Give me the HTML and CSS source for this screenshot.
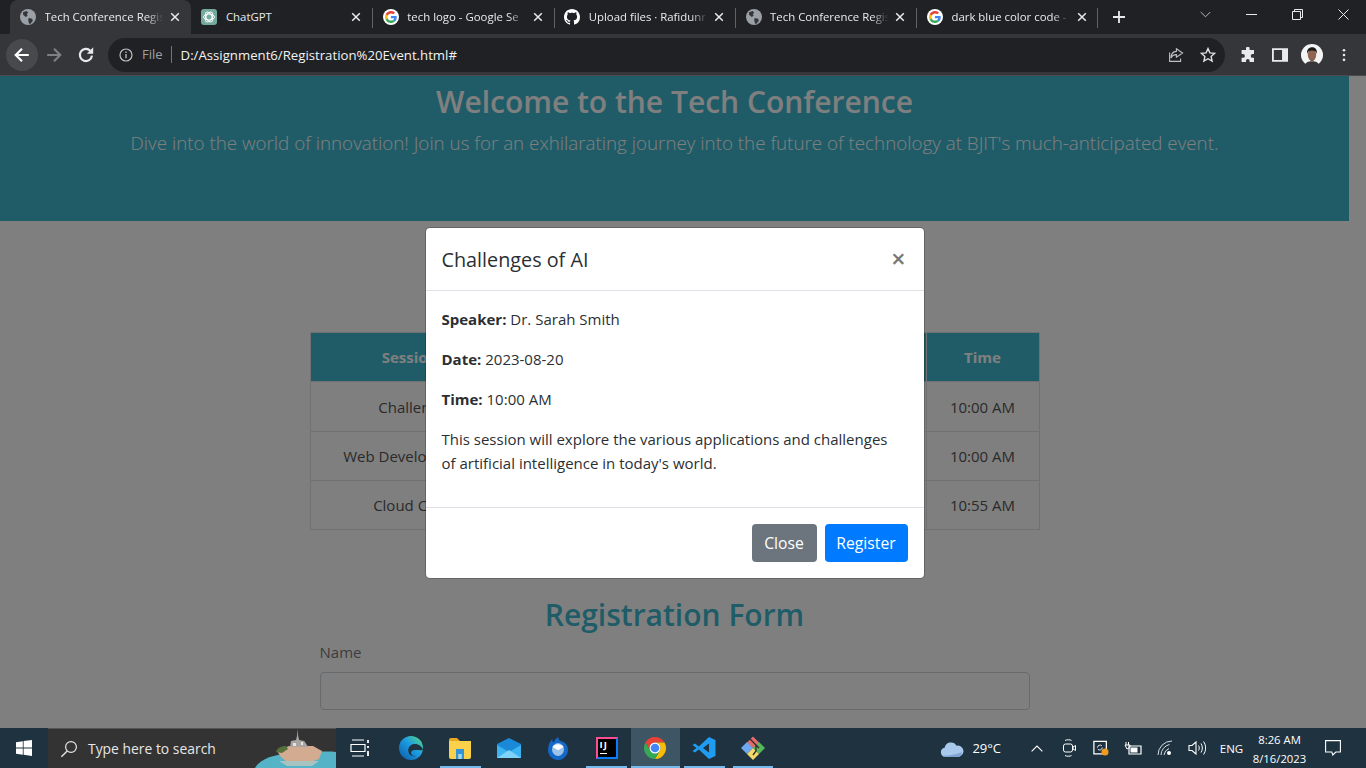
FILE: index.html
```html
<!DOCTYPE html>
<html lang="en">
<head>
  <meta charset="UTF-8" />
  <title>Tech Conference Registration</title>
  <meta name="viewport" content="width=device-width, initial-scale=1.0" />
  <link rel="stylesheet" href="styles.css">
</head>
<body>
  <svg class="sprite" xmlns="http://www.w3.org/2000/svg">
    <symbol id="i-globe" viewBox="0 0 16 16">
      <circle cx="8" cy="8" r="8" fill="#9aa0a6"/>
      <path d="M3 3.2 6.6 2l1.6 1.6-1.4 1.6.9 1.6-2 1.2-2.6-2.2zM8.600 9l3.600.8.6 2.200-2.600 3-1.200-.4-.8-3.400z" fill="#35363a"/>
    </symbol>
    <symbol id="i-google" viewBox="-8 -8 64 64">
      <circle cx="24" cy="24" r="32" fill="#fff"/>
      <path fill="#EA4335" d="M24 9.5c3.54 0 6.71 1.22 9.21 3.6l6.85-6.85C35.9 2.38 30.47 0 24 0 14.62 0 6.51 5.38 2.56 13.22l7.98 6.19C12.43 13.72 17.74 9.5 24 9.5z"/>
      <path fill="#4285F4" d="M46.98 24.55c0-1.57-.15-3.09-.38-4.55H24v9.02h12.94c-.58 2.96-2.26 5.48-4.78 7.18l7.73 6c4.51-4.18 7.09-10.36 7.09-17.65z"/>
      <path fill="#FBBC05" d="M10.53 28.59c-.48-1.45-.76-2.99-.76-4.59s.27-3.14.76-4.59l-7.98-6.19C.92 16.46 0 20.12 0 24c0 3.88.92 7.54 2.56 10.78l7.97-6.19z"/>
      <path fill="#34A853" d="M24 48c6.48 0 11.93-2.13 15.89-5.81l-7.73-6c-2.15 1.45-4.92 2.3-8.16 2.3-6.26 0-11.57-4.22-13.47-9.91l-7.98 6.19C6.51 42.62 14.62 48 24 48z"/>
    </symbol>
    <symbol id="i-x" viewBox="0 0 10 10">
      <path d="M1.2 1.2 8.8 8.8M8.8 1.2 1.2 8.8" stroke="#e8eaed" stroke-width="1.5" fill="none"/>
    </symbol>
  </svg>

  <div class="tabstrip">
    <div class="tab active">
      <svg class="fav"><use href="#i-globe"/></svg>
      <span class="tab-title">Tech Conference Regis</span>
      <svg class="tab-x"><use href="#i-x"/></svg>
    </div>
    <div class="tab">
      <svg class="fav" viewBox="0 0 16 16">
        <rect width="16" height="16" rx="3" fill="#74aa9c"/>
        <g fill="none" stroke="#fff" stroke-width="1">
          <ellipse cx="8" cy="8" rx="5.4" ry="3"/>
          <ellipse cx="8" cy="8" rx="5.4" ry="3" transform="rotate(60 8 8)"/>
          <ellipse cx="8" cy="8" rx="5.4" ry="3" transform="rotate(120 8 8)"/>
        </g>
      </svg>
      <span class="tab-title no-fade">ChatGPT</span>
      <svg class="tab-x"><use href="#i-x"/></svg>
    </div>
    <div class="tab">
      <svg class="fav"><use href="#i-google"/></svg>
      <span class="tab-title">tech logo - Google Se</span>
      <svg class="tab-x"><use href="#i-x"/></svg>
    </div>
    <div class="tab">
      <svg class="fav" viewBox="0 0 16 16">
        <circle cx="8" cy="8" r="7.6" fill="#202124"/>
        <path fill="#fff" d="M8 0C3.58 0 0 3.58 0 8c0 3.54 2.29 6.53 5.47 7.59.4.07.55-.17.55-.38 0-.19-.01-.82-.01-1.49-2.01.37-2.53-.49-2.69-.94-.09-.23-.48-.94-.82-1.13-.28-.15-.68-.52-.01-.53.63-.01 1.08.58 1.23.82.72 1.21 1.87.87 2.33.66.07-.52.28-.87.51-1.07-1.78-.2-3.64-.89-3.64-3.95 0-.87.31-1.59.82-2.15-.08-.2-.36-1.02.08-2.12 0 0 .67-.21 2.2.82.64-.18 1.32-.27 2-.27.68 0 1.36.09 2 .27 1.53-1.04 2.2-.82 2.2-.82.44 1.1.16 1.92.08 2.12.51.56.82 1.27.82 2.15 0 3.07-1.87 3.75-3.65 3.95.29.25.54.73.54 1.48 0 1.07-.01 1.93-.01 2.2 0 .21.15.46.55.38A8.013 8.013 0 0016 8c0-4.42-3.58-8-8-8z"/>
      </svg>
      <span class="tab-title">Upload files · Rafidunr</span>
      <svg class="tab-x"><use href="#i-x"/></svg>
    </div>
    <div class="tab">
      <svg class="fav"><use href="#i-globe"/></svg>
      <span class="tab-title">Tech Conference Regis</span>
      <svg class="tab-x"><use href="#i-x"/></svg>
    </div>
    <div class="tab">
      <svg class="fav"><use href="#i-google"/></svg>
      <span class="tab-title">dark blue color code -</span>
      <svg class="tab-x"><use href="#i-x"/></svg>
    </div>
    <svg class="new-tab" viewBox="0 0 12 12"><path d="M6 0v12M0 6h12" stroke="#e8eaed" stroke-width="1.8"/></svg>
    <div class="win-btns">
      <svg class="win-chevron" viewBox="0 0 12 7"><path d="M.8.8 6 6l5.2-5.2" fill="none" stroke="#c4c7cc" stroke-width="1"/></svg>
      <svg class="win-min" viewBox="0 0 11 1"><path d="M0 .5h11" stroke="#e8eaed" stroke-width="1"/></svg>
      <svg class="win-max" viewBox="0 0 11 11"><path d="M.5 2.5h8v8h-8zM2.500 2.500v-2h8v8h-2" fill="none" stroke="#e8eaed" stroke-width="1"/></svg>
      <svg class="win-close" viewBox="0 0 11 11"><path d="m.5.5 10 10M10.500.5l-10 10" stroke="#e8eaed" stroke-width="1"/></svg>
    </div>
  </div>

  <div class="toolbar">
    <div class="nav-btn hover">
      <svg viewBox="0 0 16 16"><path d="M14 8H2.6M8 2.4 2.4 8 8 13.6" fill="none" stroke="#fff" stroke-width="1.9"/></svg>
    </div>
    <div class="nav-btn">
      <svg viewBox="0 0 16 16"><path d="M2 8h11.4M8 2.4 13.6 8 8 13.6" fill="none" stroke="#7d8084" stroke-width="1.9"/></svg>
    </div>
    <div class="nav-btn">
      <svg viewBox="0 0 16 16"><path d="M13.300 8.600a5.400 5.400 0 1 1-1.500-4.400" fill="none" stroke="#e8eaed" stroke-width="1.9"/><path d="M14.400 1.200v5.600H8.800z" fill="#e8eaed"/></svg>
    </div>
    <div class="omnibox">
      <svg class="omni-info" viewBox="0 0 14 14"><circle cx="7" cy="7" r="6" fill="none" stroke="#bdc1c6" stroke-width="1.2"/><path d="M7 6v4.200M7 3.600v1.300" stroke="#bdc1c6" stroke-width="1.3"/></svg>
      <span class="omni-file">File</span>
      <span class="omni-url">D:/Assignment6/Registration%20Event.html#</span>
      <svg class="omni-share" viewBox="0 0 16 16"><path d="M8.400 1.800 14.600 6l-6.200 4.200V7.600C5.600 7.600 3.800 9 3 11c0-3.800 2-6.400 5.400-6.600zM1.600 5.400v9h11v-3" fill="none" stroke="#bdc1c6" stroke-width="1.1"/></svg>
      <svg class="omni-star" viewBox="0 0 16 16"><path d="m8 1.600 1.900 4.300 4.700.5-3.500 3.100 1 4.600L8 11.700l-4.100 2.400 1-4.600-3.500-3.100 4.700-.5z" fill="none" stroke="#dfe1e5" stroke-width="1.4"/></svg>
    </div>
    <svg class="tool-icon puzzle" viewBox="0 0 16 16"><path fill="#e8eaed" d="M6 1.500a1.800 1.800 0 0 1 3.600 0V3H14v4h-1.400a1.900 1.900 0 0 0 0 3.800H14V15H9.600v-1.300a1.800 1.800 0 0 0-3.600 0V15H1.600v-4.200H3A1.900 1.900 0 0 0 3 7H1.600V3H6z"/></svg>
    <svg class="tool-icon" viewBox="0 0 14 14"><path fill="#e8eaed" d="M0 1h14v12H0zM1.600 2.600v8.800h7.200V2.600z"/></svg>
    <svg class="avatar" viewBox="0 0 22 22">
      <circle cx="11" cy="11" r="11" fill="#f4f4f4"/>
      <path d="M3.600 22c.6-3.600 3.600-4.800 7.400-4.800s6.800 1.200 7.400 4.800z" fill="#3a3638"/>
      <ellipse cx="11" cy="11" rx="4.200" ry="5.800" fill="#8f6650"/>
      <path d="M6.200 10c-.8-4.600 1.800-6.800 5-6.800s5.200 2.200 4.600 6.800c-.8-2.400-1.800-3.400-4.800-3.400s-4 1-4.800 3.400z" fill="#1d1a1b"/>
      <path d="M8.400 14.400c1.400 2 3.800 2 5.200 0-.4 3-4.800 3-5.200 0z" fill="#3c2c28"/>
    </svg>
    <svg class="kebab" viewBox="0 0 4 16"><circle cx="2" cy="2.500" r="1.500" fill="#e8eaed"/><circle cx="2" cy="8" r="1.500" fill="#e8eaed"/><circle cx="2" cy="13.500" r="1.500" fill="#e8eaed"/></svg>
  </div>

  <div class="viewport">
    <header class="hero">
      <h1>Welcome to the Tech Conference</h1>
      <p>Dive into the world of innovation! Join us for an exhilarating journey into the future of technology at BJIT's much-anticipated event.</p>
    </header>

    <div class="container">
      <table class="schedule">
        <thead>
          <tr><th class="col-session">Session Name</th><th class="col-speaker"></th><th class="col-date"></th><th class="col-time">Time</th></tr>
        </thead>
        <tbody>
          <tr><td>Challenges of AI</td><td></td><td></td><td>10:00 AM</td></tr>
          <tr><td>Web Development Trends</td><td></td><td></td><td>10:00 AM</td></tr>
          <tr><td>Cloud Computing</td><td></td><td></td><td>10:55 AM</td></tr>
        </tbody>
      </table>

      <h2 class="form-title">Registration Form</h2>
      <form class="reg-form">
        <label for="name">Name</label>
        <input id="name" type="text" />
      </form>
    </div>

    <div class="backdrop">
      <div class="modal">
        <div class="modal-header">
          <h5>Challenges of AI</h5>
          <span class="modal-close">×</span>
        </div>
        <div class="modal-body">
          <p><b>Speaker:</b> Dr. Sarah Smith</p>
          <p><b>Date:</b> 2023-08-20</p>
          <p><b>Time:</b> 10:00 AM</p>
          <p class="modal-desc">This session will explore the various applications and challenges of artificial intelligence in today's world.</p>
        </div>
        <div class="modal-footer">
          <button class="btn btn-grey">Close</button>
          <button class="btn btn-blue">Register</button>
        </div>
      </div>
    </div>
  </div>

  <div class="taskbar">
    <div class="start">
      <svg viewBox="0 0 16 16"><path fill="#fff" d="M0 2.200 6.800 1.200v6.400H0zM7.600 1.100 16 0v7.600H7.600zM0 8.400h6.800v6.400L0 13.800zM7.600 8.400H16V16l-8.400-1.200z"/></svg>
    </div>
    <div class="search">
      <svg class="search-glass" viewBox="0 0 18 18"><circle cx="11" cy="7" r="5.400" fill="none" stroke="#e6e6e6" stroke-width="1.200"/><path d="M7.200 11 1.400 16.800" stroke="#e6e6e6" stroke-width="1.400"/></svg>
      <span>Type here to search</span>
      <svg class="search-art" viewBox="0 0 81 40">
        <path d="M0 40C6 30 20 26 40 25c18-1 32-2 41-1v16z" fill="#55b3c8"/>
        <path d="M22 23 34 18h24l9 5-3 8-8 3H32l-6-5z" fill="#d3ab90"/>
        <path d="M21 24c1-4 5-6 10-6l2 3-6 4z" fill="#55703a"/>
        <path d="M35 19l1-6 5-1 1-4 .6-7 .6 7 1 4 5 1 4 6z" fill="#a9a5a2"/>
        <path d="M38 15h3v3h-3zM46 14h2v3h-2z" fill="#e6e2dc"/>
        <path d="M24 33h40l-7 5H32z" fill="#a8c4c0"/>
      </svg>
    </div>
    <div class="task-cell task-view">
      <svg viewBox="0 0 20 18"><path d="M2 1h12M2 17h12M1 5.500h14v7H1z" fill="none" stroke="#fff" stroke-width="1.200"/><path d="M18 1v3M18 7v2M18 12v5" stroke="#fff" stroke-width="1.800"/></svg>
    </div>
    <div class="task-icons">
      <div class="task-cell">
        <svg viewBox="0 0 24 24">
          <defs><linearGradient id="edge" x1="0" y1="1" x2="1" y2="0"><stop offset="0" stop-color="#0c59a4"/><stop offset=".55" stop-color="#1b9de2"/><stop offset="1" stop-color="#5fdc7a"/></linearGradient></defs>
          <circle cx="12" cy="12" r="12" fill="url(#edge)"/>
          <path d="M24 14c-1-4-5-6.500-9-6-4 .6-6.500 4-5.500 8 .8 3.400 4.200 5 7.500 4.200-3 .2-5-1.400-5-3.400 0-1.400 1.200-2.600 3.600-2.800 3-.2 6 .4 8.400 0z" fill="#1e3240"/>
        </svg>
      </div>
      <div class="task-cell open">
        <svg viewBox="0 0 24 22">
          <path d="M1 3a2 2 0 0 1 2-2h6l3 3H1z" fill="#e8a920"/>
          <path d="M1 4h22v16a2 2 0 0 1-2 2H3a2 2 0 0 1-2-2z" fill="#fbd14b"/>
          <path d="M8 12h8v10h-2.500v-5h-3v5H8z" fill="#2f95d8"/>
          <path d="M10.500 17h3v5h-3z" fill="#9fd5f2"/>
        </svg>
      </div>
      <div class="task-cell">
        <svg viewBox="0 0 24 20">
          <path d="M0 6 12 0l12 6v14H0z" fill="#1a8ad8"/>
          <path d="M0 7l12 7 12-7v13H0z" fill="#3db4f2"/>
          <path d="M0 20l12-8 12 8z" fill="#7fd3f8"/>
        </svg>
      </div>
      <div class="task-cell">
        <svg viewBox="0 0 22 24">
          <path d="M11 1c1 2 .4 3 2.500 4C19 6 21 10 21 14c0 5.500-4.500 10-10 10S1 19.500 1 14C1 9 3 5 5.500 3c-.4 2 0 3 1 3.600C7.500 4.500 9 2.500 11 1z" fill="#1468c8"/>
          <ellipse cx="11" cy="13.500" rx="6" ry="6.500" fill="#9cc2ea"/>
          <path d="M5.500 11c2-3.600 9-3.600 11 0l-5.500 3.200z" fill="#fff"/>
        </svg>
      </div>
      <div class="task-cell open">
        <div class="ij-tile"><span>IJ</span><i></i></div>
      </div>
      <div class="task-cell open current">
        <svg viewBox="0 0 24 24">
          <path fill="#e94235" d="M2.470 6.500A11 11 0 0 1 21.530 6.500H12A5.500 5.500 0 0 0 7.240 14.750z"/>
          <path fill="#fbbc04" d="M21.530 6.500A11 11 0 0 1 12 23l4.760-8.250A5.500 5.500 0 0 0 12 6.500z"/>
          <path fill="#34a853" d="M12 23A11 11 0 0 1 2.470 6.500l4.770 8.250a5.500 5.500 0 0 0 9.520 0z"/>
          <circle cx="12" cy="12" r="5.500" fill="#fff"/>
          <circle cx="12" cy="12" r="4.300" fill="#4285f4"/>
        </svg>
      </div>
      <div class="task-cell open">
        <svg viewBox="0 0 24 24">
          <path fill="#1f9cf0" d="M17 1 6.800 10.600 3 7.600.5 9l4 3-4 3L3 16.400l3.800-3 10.200 9.600 6.500-3V4zm0 6.600v8.800L11 12z"/>
        </svg>
      </div>
      <div class="task-cell open">
        <svg viewBox="0 0 24 24">
          <path fill="#e66a6a" d="M12 .5 18 6.500l-6 6-6-6z"/>
          <path fill="#6fa8ee" d="M0 12 6 6l6 6-6 6z"/>
          <path fill="#58b75a" d="M12 12l6-6 6 6-6 6z"/>
          <path fill="#f3d86a" d="M12 12l6 6-6 6-6-6z"/>
          <path d="M9 3l6 6v6l-3 4M15 9l3 3" stroke="#2b2b2b" stroke-width="1.300" fill="none"/>
        </svg>
      </div>
    </div>
    <div class="tray">
      <div class="tray-weather">
        <svg viewBox="0 0 26 18"><path d="M6 18a5 5 0 0 1-1-9.900A7 7 0 0 1 18 6a6 6 0 0 1 2.500 12z" fill="#a8c8ec"/><path d="M6 18a5 5 0 0 1-3.400-1.400C8 17 16 16 23.500 13c0 3-1 5-3 5z" fill="#7fa5d4"/></svg>
        <span>29°C</span>
      </div>
      <div class="tray-cell">
        <svg class="w12" viewBox="0 0 12 7"><path d="M.6 6.400 6 1l5.400 5.400" fill="none" stroke="#fff" stroke-width="1.100"/></svg>
      </div>
      <div class="tray-cell">
        <svg class="w14" viewBox="0 0 14 18"><path d="M3 1.500c1.500-1 5-1 6.500 0M3 16.500c1.500 1 5 1 6.500 0" fill="none" stroke="#fff"/><rect x="1.500" y="5" width="9" height="8" rx="2" fill="none" stroke="#fff"/><path d="m11 8 2.500-1.500v5L11 10z" fill="none" stroke="#fff"/></svg>
      </div>
      <div class="tray-cell">
        <svg class="w18" viewBox="0 0 18 18"><path d="M1 1.500h14v14H1z" fill="none" stroke="#fff" stroke-width="1.400"/><path d="M5 8.500a3 3 0 0 1 5-2M10.500 8.500a3 3 0 0 1-5 2" fill="none" stroke="#fff"/><circle cx="13.500" cy="13.500" r="4" fill="#f09a1e"/></svg>
      </div>
      <div class="tray-cell">
        <svg class="w18" viewBox="0 0 18 14"><path d="M5 5h12v8H5z" fill="none" stroke="#fff" stroke-width="1.200"/><path d="M6.500 6.500h7v5h-7z" fill="#fff"/><path d="M2 1v3M4.500 1v3M1 4h5v2.500L3 8z" fill="none" stroke="#fff"/></svg>
      </div>
      <div class="tray-cell">
        <svg class="w16" viewBox="0 0 16 16"><path d="M1 15A14 14 0 0 1 15 1M4 15A11 11 0 0 1 12.500 4.500M7 15a8 8 0 0 1 5-6.500" fill="none" stroke="#d8dde0" stroke-width="1"/><circle cx="12" cy="13" r="2" fill="#fff"/></svg>
      </div>
      <div class="tray-cell">
        <svg class="w18" viewBox="0 0 18 16"><path d="M1 5.500h3L8 2v12l-4-3.500H1z" fill="none" stroke="#fff" stroke-width="1.100"/><path d="M10.500 5.500c1 1.500 1 3.500 0 5M13 3.500c1.800 2.600 1.800 6.400 0 9M15.500 1.500c2.800 3.800 2.800 9.200 0 13" fill="none" stroke="#fff"/></svg>
      </div>
      <div class="tray-cell tray-lang">ENG</div>
      <div class="tray-clock"><span>8:26 AM</span><span>8/16/2023</span></div>
      <div class="tray-notif">
        <svg viewBox="0 0 16 16"><path d="M.6.600h14.800v11.400h-4.600l-3 3-1-3H.6z" fill="none" stroke="#fff" stroke-width="1.100"/></svg>
      </div>
    </div>
  </div>
</body>
</html>
```

FILE: styles.css
```css
* {
  box-sizing: border-box;
}
html, body {
  margin: 0;
  height: 768px;
  overflow: hidden;
}
body {
  font-family: 'Open Sans', 'Noto Sans', sans-serif;
  display: flex;
  flex-direction: column;
  background: #fff;
}
.sprite {
  display: none;
}
svg {
  display: block;
  flex: none;
}

/* browser tabs */
.tabstrip {
  height: 34px;
  background: #202124;
  display: flex;
  align-items: flex-start;
  padding-left: 9.5px;
}
.tab {
  width: 181.4px;
  height: 34px;
  display: flex;
  align-items: center;
  padding: 0 11px 1px 10.5px;
  position: relative;
  color: #e8eaed;
  font-size: 11.4px;
}
.tab.active {
  background: #35363a;
  border-radius: 8px 8px 0 0;
}
.tab:not(.active) + .tab::before,
.tab:nth-child(6)::after {
  content: "";
  position: absolute;
  top: 8px;
  height: 20px;
  width: 1px;
  background: #5f6368;
}
.tab:not(.active) + .tab::before {
  left: 0;
}
.tab:nth-child(6)::after {
  right: 0;
}
.fav {
  width: 16px;
  height: 16px;
}
.tab-title {
  margin-left: 8.5px;
  width: 121px;
  overflow: hidden;
  white-space: nowrap;
  -webkit-mask-image: linear-gradient(to right, #000 84%, transparent 98%);
  mask-image: linear-gradient(to right, #000 84%, transparent 98%);
}
.tab-title.no-fade {
  -webkit-mask-image: none;
  mask-image: none;
}
.tab-x {
  width: 10px;
  height: 10px;
  margin-left: auto;
}
.new-tab {
  width: 12px;
  height: 12px;
  margin: 11px 0 0 15px;
}
.win-btns {
  margin-left: auto;
  display: flex;
  align-items: center;
  height: 28px;
}
.win-chevron {
  width: 11px;
  height: 7px;
  margin-right: 35px;
}
.win-min {
  width: 11px;
  height: 1px;
  margin-right: 35px;
}
.win-max {
  width: 11px;
  height: 11px;
  margin-right: 35px;
}
.win-close {
  width: 11px;
  height: 11px;
  margin-right: 17px;
}

/* toolbar */
.toolbar {
  height: 42px;
  background: #35363a;
  display: flex;
  align-items: center;
  padding-left: 6px;
  border-bottom: 1px solid #4a4b4e;
}
.nav-btn {
  width: 32px;
  height: 32px;
  border-radius: 50%;
  display: flex;
  align-items: center;
  justify-content: center;
}
.nav-btn.hover {
  background: #48494d;
}
.nav-btn svg {
  width: 18px;
  height: 18px;
}
.omnibox {
  width: 1117px;
  height: 34px;
  margin-left: 6px;
  background: #202124;
  border-radius: 17px;
  display: flex;
  align-items: center;
  padding-left: 11px;
  font-size: 13px;
}
.omni-info {
  width: 14px;
  height: 14px;
}
.omni-file {
  color: #9aa0a6;
  margin-left: 9px;
  padding-right: 8px;
  border-right: 1px solid #70757a;
  line-height: 17px;
}
.omni-url {
  color: #f1f3f4;
  margin-left: 9px;
  font-size: 13.2px;
}
.omni-share {
  width: 16px;
  height: 16px;
  margin-left: auto;
}
.omni-star {
  width: 16px;
  height: 16px;
  margin: 0 9px 0 16px;
}
.tool-icon {
  width: 16px;
  height: 16px;
  margin-left: 16px;
}
.tool-icon.puzzle {
  margin-left: 15px;
}
.avatar {
  width: 22px;
  height: 22px;
  margin-left: 13px;
}
.kebab {
  width: 4px;
  height: 14px;
  margin-left: 19px;
}

/* page under the modal */
.viewport {
  height: 652px;
  position: relative;
  overflow: hidden;
  background: #fff;
  padding-right: 17px;
}
.hero {
  height: 145px;
  background: #3eb9cf;
  color: #fff;
  text-align: center;
  padding-top: 2px;
}
.hero h1 {
  margin: 0;
  font-size: 30px;
  font-weight: 600;
  line-height: 48px;
}
.hero p {
  margin: 2px 0 0;
  font-size: 18.8px;
  font-weight: 300;
  line-height: 30px;
}
.container {
  width: 730px;
  margin: 0 auto;
  padding-top: 111px;
}
.schedule {
  width: 729px;
  border-collapse: collapse;
  table-layout: fixed;
  font-size: 15px;
  color: #555;
}
.schedule th {
  background: #3eb9cf;
  color: #fff;
  height: 49px;
  border: 1px solid #dee2e6;
  font-size: 15px;
  font-weight: 700;
}
.schedule td {
  height: 49px;
  text-align: center;
  border: 1px solid #dee2e6;
}
.schedule tbody tr:first-child td {
  height: 50px;
}
.col-session {
  width: 248px;
}
.col-speaker {
  width: 186px;
}
.col-date {
  width: 182px;
}
.col-time {
  width: 113px;
}
.form-title {
  margin: 66px 0 0;
  text-align: center;
  font-size: 30px;
  font-weight: 600;
  line-height: 38px;
  color: #3eb9cf;
}
.reg-form {
  padding: 0 10px;
  margin-top: 6px;
}
.reg-form label {
  display: block;
  font-size: 15px;
  line-height: 24px;
  margin-bottom: 8px;
  color: #7a7a7a;
}
.reg-form input {
  display: block;
  width: 100%;
  height: 38px;
  border: 1px solid #ced4da;
  border-radius: 4px;
  background: #fff;
}

/* modal */
.backdrop {
  position: absolute;
  inset: 0;
  background: rgba(0, 0, 0, 0.5);
  display: flex;
  align-items: center;
  justify-content: center;
  padding: 2px 17px 0 0;
}
.modal {
  width: 500px;
  background: #fff;
  border: 1px solid rgba(0, 0, 0, 0.2);
  border-radius: 5px;
  color: #2b2f33;
  font-size: 15px;
  line-height: 24px;
  background-clip: padding-box;
}
.modal-header {
  display: flex;
  justify-content: space-between;
  align-items: flex-start;
  padding: 17px 16px 15px;
  border-bottom: 1px solid #dee2e6;
}
.modal-header h5 {
  margin: 0;
  font-size: 19.8px;
  font-weight: 500;
  line-height: 30px;
}
.modal-close {
  font-size: 25px;
  font-weight: 600;
  line-height: 26px;
  color: #777;
  margin-right: 2px;
}
.modal-body {
  padding: 16px;
}
.modal-body p {
  margin: 0 0 16px;
}
.modal-body .modal-desc {
  max-width: 456px;
}
.modal-body b {
  font-weight: 700;
}
.modal-footer {
  display: flex;
  justify-content: flex-end;
  gap: 8px;
  padding: 16px;
  border-top: 1px solid #dee2e6;
}
.btn {
  height: 38px;
  padding: 0;
  border: 1px solid transparent;
  border-radius: 4px;
  color: #fff;
  font: inherit;
  font-size: 15.7px;
}
.btn-grey {
  width: 65px;
  background: #6c757d;
}
.btn-blue {
  width: 83px;
  background: #007bff;
}

/* windows taskbar */
.taskbar {
  height: 40px;
  background: #1e3240;
  display: flex;
  align-items: stretch;
  color: #fff;
}
.start {
  width: 48px;
  display: flex;
  align-items: center;
  justify-content: center;
}
.start svg {
  width: 16px;
  height: 16px;
}
.search {
  width: 288px;
  background: #333;
  border-top: 1px solid #555;
  display: flex;
  align-items: center;
  padding-left: 12px;
  font-size: 13.9px;
  position: relative;
  color: #e6e6e6;
}
.search-glass {
  width: 18px;
  height: 18px;
  margin-right: 10px;
}
.search-art {
  position: absolute;
  right: 0;
  bottom: 0;
  width: 81px;
  height: 40px;
}
.task-cell {
  width: 48.8px;
  display: flex;
  align-items: center;
  justify-content: center;
  position: relative;
}
.task-cell svg {
  width: 24px;
  height: 24px;
}
.task-view {
  width: 48px;
}
.task-view svg {
  width: 20px;
  height: 18px;
}
.task-icons {
  display: flex;
  margin-left: 3px;
}
.task-cell.open::after {
  content: "";
  position: absolute;
  left: 4px;
  right: 4px;
  bottom: 0;
  height: 2px;
  background: #76b9ed;
}
.task-cell.current {
  background: #3e5563;
}
.task-cell.current::after {
  left: 0;
  right: 0;
}
.ij-tile {
  width: 22px;
  height: 22px;
  background: #000;
  border: 2px solid;
  border-color: #fc4f93 #087cfa #087cfa #fc4f93;
  font-size: 9.5px;
  line-height: 10px;
  font-weight: 700;
  letter-spacing: 1px;
  padding: 1px 0 0 2px;
  color: #fff;
}
.ij-tile span {
  display: block;
}
.ij-tile i {
  display: block;
  width: 7px;
  height: 1px;
  margin-top: 3px;
  background: #fff;
}
.tray {
  margin-left: auto;
  display: flex;
  align-items: stretch;
  padding-right: 8px;
}
.tray-weather {
  display: flex;
  align-items: center;
  font-size: 13px;
  gap: 8px;
  margin-right: 20px;
}
.tray-weather svg {
  width: 24px;
  height: 17px;
}
.tray-cell {
  width: 32px;
  display: flex;
  align-items: center;
  justify-content: center;
  font-size: 11.5px;
}
.w12 {
  width: 12px;
  height: 7px;
}
.w14 {
  width: 14px;
  height: 18px;
}
.w16 {
  width: 16px;
  height: 16px;
}
.w18 {
  width: 18px;
  height: 16px;
}
.tray-lang {
  width: 37px;
}
.tray-clock {
  width: 58px;
  display: flex;
  flex-direction: column;
  align-items: center;
  justify-content: center;
  font-size: 11.3px;
  line-height: 19px;
  padding: 1px 0 0 1px;
}
.tray-notif {
  width: 50px;
  display: flex;
  align-items: center;
  justify-content: center;
}
.tray-notif svg {
  width: 16px;
  height: 16px;
}
```
